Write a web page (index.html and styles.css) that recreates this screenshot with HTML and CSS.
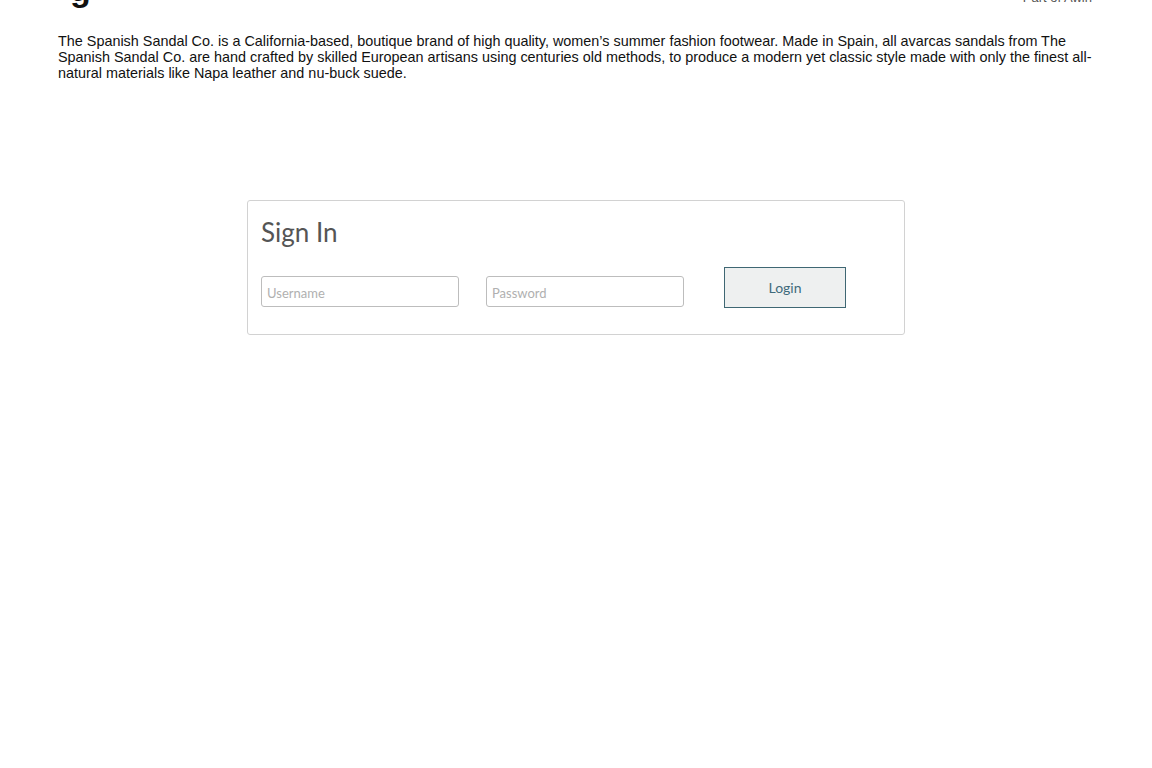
FILE: index.html
```html
<!DOCTYPE html>
<html lang="en">
<head>
<meta charset="utf-8">
<title>Sign In</title>
<link rel="stylesheet" href="styles.css">
</head>
<body>
<header class="top">
  <span class="logo">g</span>
  <span class="partof">Part of Awin</span>
</header>
<main class="page">
  <p class="intro">The Spanish Sandal Co. is a California-based, boutique brand of high quality, women’s summer fashion footwear. Made in Spain, all avarcas sandals from The Spanish Sandal Co. are hand crafted by skilled European artisans using centuries old methods, to produce a modern yet classic style made with only the finest all-natural materials like Napa leather and nu-buck suede.</p>
  <section class="card">
    <h1 class="card-title">Sign In</h1>
    <form class="login-row">
      <input class="field" type="text" placeholder="Username">
      <input class="field field-pass" type="password" placeholder="Password">
      <button class="btn" type="button">Login</button>
    </form>
  </section>
</main>
</body>
</html>
```
FILE: styles.css
```css
html, body {
  margin: 0;
  padding: 0;
  background: #fff;
}
body {
  font-family: "Liberation Sans", Arial, sans-serif;
  color: #111;
}
.top {
  display: flex;
  justify-content: space-between;
  align-items: flex-end;
  height: 40px;
  margin-top: -35px;
  padding: 0 60px 0 70px;
}
.logo {
  font-family: "Liberation Sans", Arial, sans-serif;
  font-size: 34px;
  font-weight: bold;
  line-height: 34px;
  color: #111;
  margin-bottom: -1px;
}
.partof {
  font-size: 13px;
  line-height: 13px;
  color: #555;
  margin-bottom: 1px;
}
.page {
  padding: 0;
}
.intro {
  margin: 28px 54px 0 58px;
  font-size: 14.4px;
  line-height: 16px;
  color: #111;
}
.card {
  width: 658px;
  box-sizing: border-box;
  margin: 119px auto 0;
  border: 1px solid #d2d2d2;
  border-radius: 3px;
  padding: 14px 13px 26px;
}
.card-title {
  margin: 0;
  font-family: "Lato", "Open Sans", sans-serif;
  font-weight: 400;
  font-size: 26px;
  line-height: 34px;
  color: #555;
}
.login-row {
  display: flex;
  align-items: flex-end;
  margin-top: 18px;
}
.field {
  width: 198px;
  height: 31px;
  margin-bottom: 1px;
  box-sizing: border-box;
  border: 1.5px solid #bdbdbd;
  border-radius: 3px;
  padding: 2px 5px 0;
  font-family: "Lato", "Open Sans", sans-serif;
  font-size: 13px;
  color: #333;
  background: #fff;
  outline: none;
}
.field::placeholder {
  color: #b0b0b0;
}
.field-pass {
  margin-left: 27px;
}
.btn {
  width: 122px;
  height: 41px;
  margin-left: 40px;
  box-sizing: border-box;
  border: 1px solid #3f6773;
  background: #eef0f0;
  color: #3e6b7c;
  font-family: "Lato", "Open Sans", sans-serif;
  font-size: 14px;
  cursor: pointer;
}
```
